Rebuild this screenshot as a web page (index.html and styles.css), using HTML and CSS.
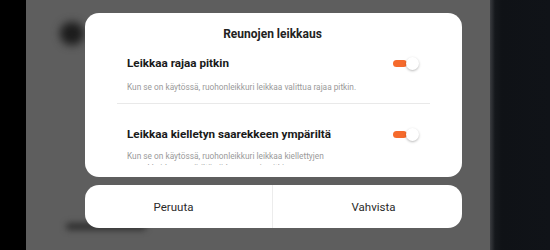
FILE: index.html
```html
<!DOCTYPE html>
<html lang="fi">
<head>
<meta charset="utf-8">
<link rel="stylesheet" href="styles.css">
</head>
<body>
<div class="screen">
  <div class="edge-left"></div>
  <div class="stage">
    <div class="blur-dot"></div>
    <div class="blur-line"></div>
    <div class="dialog">
      <div class="card sheet">
        <div class="sheet-title">Reunojen leikkaus</div>
        <div class="scroll">
          <div class="item">
            <div class="item-row">
              <span class="item-title">Leikkaa rajaa pitkin</span>
              <span class="toggle"><span class="track"></span><span class="knob"></span></span>
            </div>
            <p class="item-desc">Kun se on käytössä, ruohonleikkuri leikkaa valittua rajaa pitkin.</p>
          </div>
          <div class="divider"></div>
          <div class="item">
            <div class="item-row">
              <span class="item-title">Leikkaa kielletyn saarekkeen ympäriltä</span>
              <span class="toggle"><span class="track"></span><span class="knob"></span></span>
            </div>
            <p class="item-desc">Kun se on käytössä, ruohonleikkuri leikkaa kiellettyjen saarekkeiden ympäriltä niiden reunoja pitkin.</p>
          </div>
        </div>
      </div>
      <div class="card actions">
        <button class="btn btn-cancel">Peruuta</button>
        <span class="vsep"></span>
        <button class="btn btn-ok">Vahvista</button>
      </div>
    </div>
  </div>
  <div class="edge-right"></div>
</div>
</body>
</html>
```

FILE: styles.css
```css
* { box-sizing: border-box; }
html, body { margin: 0; padding: 0; }
body {
  width: 550px;
  height: 250px;
  overflow: hidden;
  font-family: Roboto, "Noto Sans", "Liberation Sans", sans-serif;
  background: #5e5e5e;
}
.screen {
  display: flex;
  width: 550px;
  height: 250px;
}
.edge-left {
  width: 26px;
  background: #000;
  flex: none;
}
.stage {
  position: relative;
  flex: 1;
  background: #5e5e5e;
  padding: 13px 28px 0 59px;
  overflow: hidden;
}
.edge-right {
  width: 60px;
  flex: none;
  background: linear-gradient(to right, #3a3c40 0px, #15181c 5px, #0f1216 12px, #101318 100%);
}
.blur-dot {
  position: absolute;
  left: 34px;
  top: 22px;
  width: 24px;
  height: 23px;
  border-radius: 50%;
  background: #1c1c1c;
  filter: blur(4px);
}
.blur-line {
  position: absolute;
  left: 40px;
  top: 223px;
  width: 80px;
  height: 7px;
  border-radius: 4px;
  background: #2e2e2e;
  filter: blur(3px);
}
.dialog {
  position: relative;
  width: 377px;
  display: flex;
  flex-direction: column;
  gap: 8px;
}
.card {
  background: #fff;
  border-radius: 14px;
}
.sheet {
  height: 164px;
  padding: 13px 0 12px;
  display: flex;
  flex-direction: column;
}
.sheet-title {
  text-align: center;
  font-size: 12px;
  font-weight: 700;
  line-height: 16px;
  color: #222;
  padding-right: 2px;
}
.scroll {
  flex: 1;
  overflow: hidden;
  padding: 10px 43px 0 42px;
}
.item-row {
  display: flex;
  align-items: center;
  justify-content: space-between;
  height: 22px;
}
.item-title {
  font-size: 11.7px;
  font-weight: 700;
  color: #1a1a1a;
}
.toggle {
  display: flex;
  align-items: center;
}
.track {
  width: 14px;
  height: 7px;
  border-radius: 3.5px;
  background: #f56a2c;
}
.knob {
  width: 13px;
  height: 13px;
  margin-left: -1px;
  border-radius: 50%;
  background: #fff;
  box-shadow: 0 1px 2.5px rgba(0,0,0,0.28);
}
.item-desc {
  margin: 7px 0 0;
  max-width: 236px;
  font-size: 8.3px;
  line-height: 12px;
  color: #9a9a9a;
}
.divider {
  height: 1px;
  background: #e9e9e9;
  margin: 10px -11px 19px -10px;
}
.item + .divider + .item .item-desc { margin-top: 5px; }
.actions {
  height: 43px;
  display: flex;
  align-items: stretch;
}
.btn {
  flex: 1;
  border: 0;
  background: transparent;
  font-family: inherit;
  font-size: 11.5px;
  color: #2a2a2a;
  padding: 0;
}
.btn-cancel { padding-right: 10px; }
.btn-ok { padding-left: 12px; }
.vsep {
  width: 1px;
  background: #ececec;
}
```
